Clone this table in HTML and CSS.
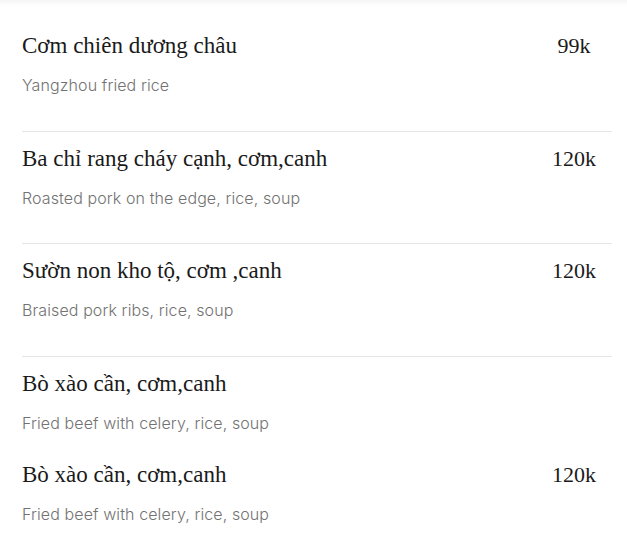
FILE: index.html
```html
<!DOCTYPE html>
<html lang="vi">
<head>
    <meta charset="UTF-8">
    <meta name="viewport" content="width=device-width, initial-scale=1.0">
    <title>Menu</title>
    <link rel="stylesheet" href="styles.css">
</head>
<body>
    <div class="top-shade"></div>
    <div class="menu">
        <div class="item">
            <div class="info">
                <h3 class="name">Cơm chiên dương châu</h3>
                <p class="desc">Yangzhou fried rice</p>
            </div>
            <div class="price">99k</div>
        </div>
        <div class="item">
            <div class="info">
                <h3 class="name">Ba chỉ rang cháy cạnh, cơm,canh</h3>
                <p class="desc">Roasted pork on the edge, rice, soup</p>
            </div>
            <div class="price">120k</div>
        </div>
        <div class="item">
            <div class="info">
                <h3 class="name">Sườn non kho tộ, cơm ,canh</h3>
                <p class="desc">Braised pork ribs, rice, soup</p>
            </div>
            <div class="price">120k</div>
        </div>
        <div class="item compact">
            <div class="info">
                <h3 class="name">Bò xào cần, cơm,canh</h3>
                <p class="desc">Fried beef with celery, rice, soup</p>
            </div>
            <div class="price"></div>
        </div>
        <div class="item last">
            <div class="info">
                <h3 class="name">Bò xào cần, cơm,canh</h3>
                <p class="desc">Fried beef with celery, rice, soup</p>
            </div>
            <div class="price">120k</div>
        </div>
    </div>
</body>
</html>
```

FILE: styles.css
```css
body {
    margin: 0;
    padding: 0;
    background: #fff;
}

.top-shade {
    height: 6px;
    background: linear-gradient(#f6f6f6, #fff);
}

.menu {
    width: 590px;
    margin-left: 22px;
    padding-top: 13px;
}

.item {
    display: flex;
    align-items: flex-start;
    padding: 12px 0 33.5px;
    border-bottom: 1px solid #e6e6e6;
}

.item.compact {
    border-bottom: none;
    padding-bottom: 13px;
}

.item.last {
    border-bottom: none;
}

.info {
    flex: 1;
}

.name {
    margin: 0;
    font-family: "Liberation Serif", "DejaVu Serif", serif;
    font-size: 23px;
    font-weight: normal;
    line-height: 30px;
    color: #1a1a1a;
}

.desc {
    margin: 12px 0 0;
    font-family: "Inter", "Liberation Sans", sans-serif;
    font-size: 16px;
    font-weight: 300;
    letter-spacing: 0.1px;
    line-height: 24px;
    color: #727272;
}

.price {
    width: 76px;
    text-align: center;
    font-family: "Liberation Serif", "DejaVu Serif", serif;
    font-size: 22px;
    line-height: 30px;
    color: #1a1a1a;
}
```
